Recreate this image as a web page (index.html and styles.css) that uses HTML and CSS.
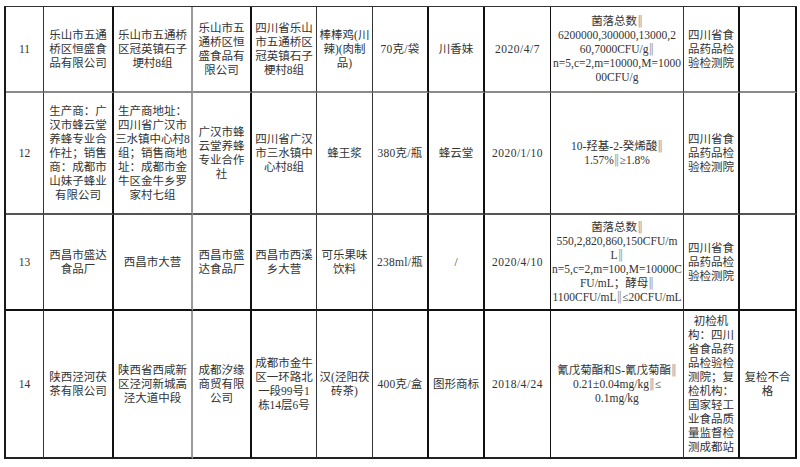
FILE: index.html
```html
<!DOCTYPE html>
<html lang="zh-CN">
<head>
<meta charset="utf-8">
<title>抽检结果</title>
<link rel="stylesheet" href="styles.css">
</head>
<body>
<table class="grid">
  <colgroup>
    <col class="w1"><col class="w2"><col class="w3"><col class="w4"><col class="w5"><col class="w6">
    <col class="w7"><col class="w8"><col class="w9"><col class="w10"><col class="w11"><col class="w12">
  </colgroup>
  <tbody>
    <tr class="r1">
      <td class="c1">11</td>
      <td class="c2">乐山市五通<br>桥区恒盛食<br>品有限公司</td>
      <td class="c3">乐山市五通桥<br>区冠英镇石子<br>埂村8组</td>
      <td class="c4">乐山市五<br>通桥区恒<br>盛食品有<br>限公司</td>
      <td class="c5">四川省乐山<br>市五通桥区<br>冠英镇石子<br>梗村8组</td>
      <td class="c6">棒棒鸡(川<br>辣)(肉制<br>品)</td>
      <td class="c7">70克/袋</td>
      <td class="c8">川香妹</td>
      <td class="c9">2020/4/7</td>
      <td class="c10">菌落总数<span class="s">‖</span><br>6200000,300000,13000,2<br>60,7000CFU/g<span class="s">‖</span><br>n=5,c=2,m=10000,M=1000<br>00CFU/g</td>
      <td class="c11">四川省食<br>品药品检<br>验检测院</td>
      <td class="c12"></td>
    </tr>
    <tr class="r2">
      <td class="c1">12</td>
      <td class="c2">生产商：广<br>汉市蜂云堂<br>养蜂专业合<br>作社；销售<br>商：成都市<br>山妹子蜂业<br>有限公司</td>
      <td class="c3">生产商地址：<br>四川省广汉市<br>三水镇中心村8<br>组；销售商地<br>址：成都市金<br>牛区金牛乡罗<br>家村七组</td>
      <td class="c4">广汉市蜂<br>云堂养蜂<br>专业合作<br>社</td>
      <td class="c5">四川省广汉<br>市三水镇中<br>心村8组</td>
      <td class="c6">蜂王浆</td>
      <td class="c7">380克/瓶</td>
      <td class="c8">蜂云堂</td>
      <td class="c9">2020/1/10</td>
      <td class="c10">10-羟基-2-癸烯酸<span class="s">‖</span><br>1.57%<span class="s">‖</span>≥1.8%</td>
      <td class="c11">四川省食<br>品药品检<br>验检测院</td>
      <td class="c12"></td>
    </tr>
    <tr class="r3">
      <td class="c1">13</td>
      <td class="c2">西昌市盛达<br>食品厂</td>
      <td class="c3">西昌市大营</td>
      <td class="c4">西昌市盛<br>达食品厂</td>
      <td class="c5">西昌市西溪<br>乡大营</td>
      <td class="c6">可乐果味<br>饮料</td>
      <td class="c7">238ml/瓶</td>
      <td class="c8">/</td>
      <td class="c9">2020/4/10</td>
      <td class="c10">菌落总数<span class="s">‖</span><br>550,2,820,860,150CFU/m<br>L<span class="s">‖</span><br>n=5,c=2,m=100,M=10000C<br>FU/mL；酵母<span class="s">‖</span><br>1100CFU/mL<span class="s">‖</span>≤20CFU/mL</td>
      <td class="c11">四川省食<br>品药品检<br>验检测院</td>
      <td class="c12"></td>
    </tr>
    <tr class="r4">
      <td class="c1">14</td>
      <td class="c2">陕西泾河茯<br>茶有限公司</td>
      <td class="c3">陕西省西咸新<br>区泾河新城高<br>泾大道中段</td>
      <td class="c4">成都汐缘<br>商贸有限<br>公司</td>
      <td class="c5">成都市金牛<br>区一环路北<br>一段99号1<br>栋14层6号</td>
      <td class="c6">汉(泾阳茯<br>砖茶)</td>
      <td class="c7">400克/盒</td>
      <td class="c8">图形商标</td>
      <td class="c9">2018/4/24</td>
      <td class="c10">氰戊菊酯和S-氰戊菊酯<span class="s">‖</span><br>0.21±0.04mg/kg<span class="s">‖</span>≤<br>0.1mg/kg</td>
      <td class="c11">初检机<br>构：四川<br>省食品药<br>品检验检<br>测院；复<br>检机构：<br>国家轻工<br>业食品质<br>量监督检<br>测成都站</td>
      <td class="c12">复检不合<br>格</td>
    </tr>
  </tbody>
</table>
</body>
</html>
```
FILE: styles.css
```css
html, body {
  margin: 0;
  padding: 0;
  background: #ffffff;
}

body {
  padding: 6px 0 0 4px;
}

.grid {
  table-layout: fixed;
  width: 793px;
  border-collapse: separate;
  border-spacing: 0;
  border-top: 1px solid #333333;
  border-left: 2px solid #1a1a1a;
  font-family: "Liberation Serif", "Noto Sans CJK SC", serif;
  font-size: 11.5px;
  line-height: 14px;
  color: #333333;
}

.w1 { width: 38px; }
.w2 { width: 70px; }
.w3 { width: 79px; }
.w4 { width: 59px; }
.w5 { width: 65px; }
.w6 { width: 56px; }
.w7 { width: 56px; }
.w8 { width: 56px; }
.w9 { width: 66px; }
.w10 { width: 133px; }
.w11 { width: 56px; }
.w12 { width: 57px; }

.grid td {
  box-sizing: border-box;
  padding: 0 1px;
  text-align: center;
  vertical-align: middle;
  white-space: nowrap;
  overflow: hidden;
  border-right: 1px solid #2a2a2a;
  border-bottom: 2px solid #222222;
}

.r1 td { height: 86px; border-bottom-color: #8a8a8a; }
.r2 td { height: 122px; border-bottom-color: #555555; }
.r3 td { height: 96px; border-bottom-color: #111111; }
.r4 td { height: 148px; border-bottom-color: #222222; }

.grid .c1 { border-right-width: 1px; border-right-color: #333333; }
.grid .c2 { border-right-width: 2px; border-right-color: #111111; }
.grid .c3 { border-right-width: 2px; border-right-color: #9a9a9a; }
.grid .c4 { border-right-width: 2px; border-right-color: #111111; }
.grid .c5 { border-right-width: 1px; border-right-color: #333333; }
.grid .c6 { border-right-width: 1px; border-right-color: #333333; }
.grid .c7 { border-right-width: 2px; border-right-color: #111111; letter-spacing: 0.3px; }
.grid .c8 { border-right-width: 2px; border-right-color: #111111; }
.grid .c9 { border-right-width: 1px; border-right-color: #111111; letter-spacing: 0.5px; }
.grid .c10 { border-right-width: 1px; border-right-color: #333333; padding: 0; }
.grid .c11 { border-right-width: 2px; border-right-color: #111111; }
.grid .c12 { border-right-width: 2px; border-right-color: #111111; }

.s {
  font-family: "DejaVu Sans", sans-serif;
  color: #a8a8a8;
}
```
